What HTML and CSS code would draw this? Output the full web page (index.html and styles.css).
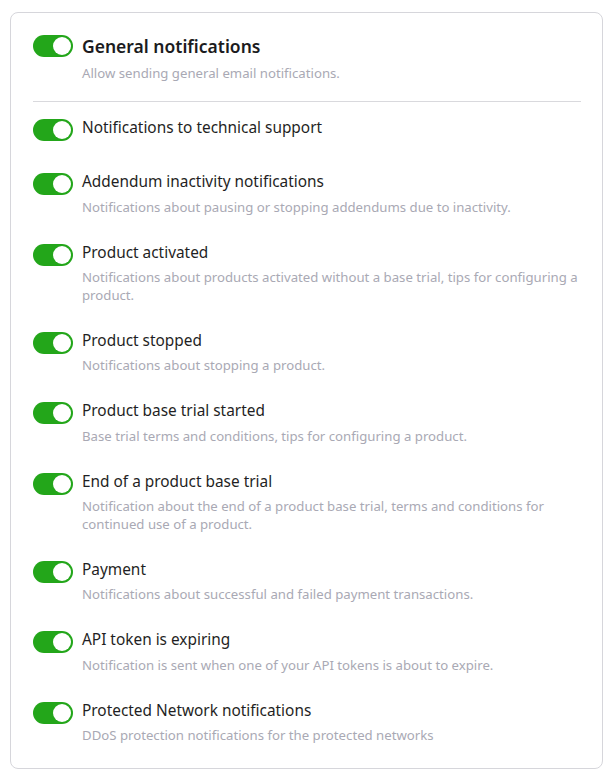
FILE: index.html
```html
<!DOCTYPE html>
<html lang="en">
<head>
<meta charset="utf-8">
<title>Notifications</title>
<link rel="stylesheet" href="styles.css">
</head>
<body>
<div class="card">
  <div class="head-row">
    <span class="toggle"><span class="knob"></span></span>
    <div class="text">
      <div class="head-title">General notifications</div>
      <div class="head-desc">Allow sending general email notifications.</div>
    </div>
  </div>
  <div class="divider"></div>
  <div class="list">
    <div class="row row-nodesc">
      <span class="toggle"><span class="knob"></span></span>
      <div class="text"><div class="title">Notifications to technical support</div></div>
    </div>
    <div class="row">
      <span class="toggle"><span class="knob"></span></span>
      <div class="text"><div class="title">Addendum inactivity notifications</div><div class="desc">Notifications about pausing or stopping addendums due to inactivity.</div></div>
    </div>
    <div class="row">
      <span class="toggle"><span class="knob"></span></span>
      <div class="text"><div class="title">Product activated</div><div class="desc">Notifications about products activated without a base trial, tips for configuring a product.</div></div>
    </div>
    <div class="row">
      <span class="toggle"><span class="knob"></span></span>
      <div class="text"><div class="title">Product stopped</div><div class="desc">Notifications about stopping a product.</div></div>
    </div>
    <div class="row">
      <span class="toggle"><span class="knob"></span></span>
      <div class="text"><div class="title">Product base trial started</div><div class="desc">Base trial terms and conditions, tips for configuring a product.</div></div>
    </div>
    <div class="row">
      <span class="toggle"><span class="knob"></span></span>
      <div class="text"><div class="title">End of a product base trial</div><div class="desc">Notification about the end of a product base trial, terms and conditions for continued use of a product.</div></div>
    </div>
    <div class="row">
      <span class="toggle"><span class="knob"></span></span>
      <div class="text"><div class="title">Payment</div><div class="desc">Notifications about successful and failed payment transactions.</div></div>
    </div>
    <div class="row">
      <span class="toggle"><span class="knob"></span></span>
      <div class="text"><div class="title">API token is expiring</div><div class="desc">Notification is sent when one of your API tokens is about to expire.</div></div>
    </div>
    <div class="row">
      <span class="toggle"><span class="knob"></span></span>
      <div class="text"><div class="title">Protected Network notifications</div><div class="desc">DDoS protection notifications for the protected networks</div></div>
    </div>
  </div>
</div>
</body>
</html>
```
FILE: styles.css
```css
* { box-sizing: border-box; }
html, body { margin: 0; padding: 0; background: #ffffff; }
body {
  padding: 12px 10px 0 10px;
  font-family: "Noto Sans", "Open Sans", sans-serif;
  color: #1f1f24;
}
.card {
  width: 593px;
  border: 1px solid #d6d6db;
  border-radius: 8px;
  padding: 21px 21px 23px 22px;
}
.head-row {
  display: flex;
  align-items: flex-start;
  gap: 9px;
}
.head-row .toggle { margin-top: 1px; }
.head-title {
  font-size: 17.5px;
  line-height: 24px;
  font-weight: 600;
  color: #1b1b20;
}
.head-desc {
  margin-top: 7px;
  font-size: 13.2px;
  line-height: 17.5px;
  color: #a9a9b4;
}
.divider {
  height: 1px;
  background: #d9d9dd;
  margin: 18.5px 0 14px 0;
}
.list {
  display: flex;
  flex-direction: column;
  gap: 24.5px;
}
.row {
  display: flex;
  align-items: flex-start;
  gap: 9px;
}
.row-nodesc { margin-bottom: 4.5px; }
.toggle {
  flex: 0 0 auto;
  width: 40px;
  height: 22px;
  border-radius: 11px;
  background: #23a61a;
  display: flex;
  align-items: center;
  justify-content: flex-end;
  padding: 2px;
  margin-top: 3px;
}
.knob {
  width: 18px;
  height: 18px;
  border-radius: 50%;
  background: #ffffff;
}
.text { flex: 1 1 auto; min-width: 0; }
.title {
  font-size: 15.4px;
  line-height: 24px;
  color: #1f1f24;
}
.desc {
  margin-top: 4.5px;
  font-size: 13.2px;
  line-height: 17.5px;
  color: #a9a9b4;
}
```
